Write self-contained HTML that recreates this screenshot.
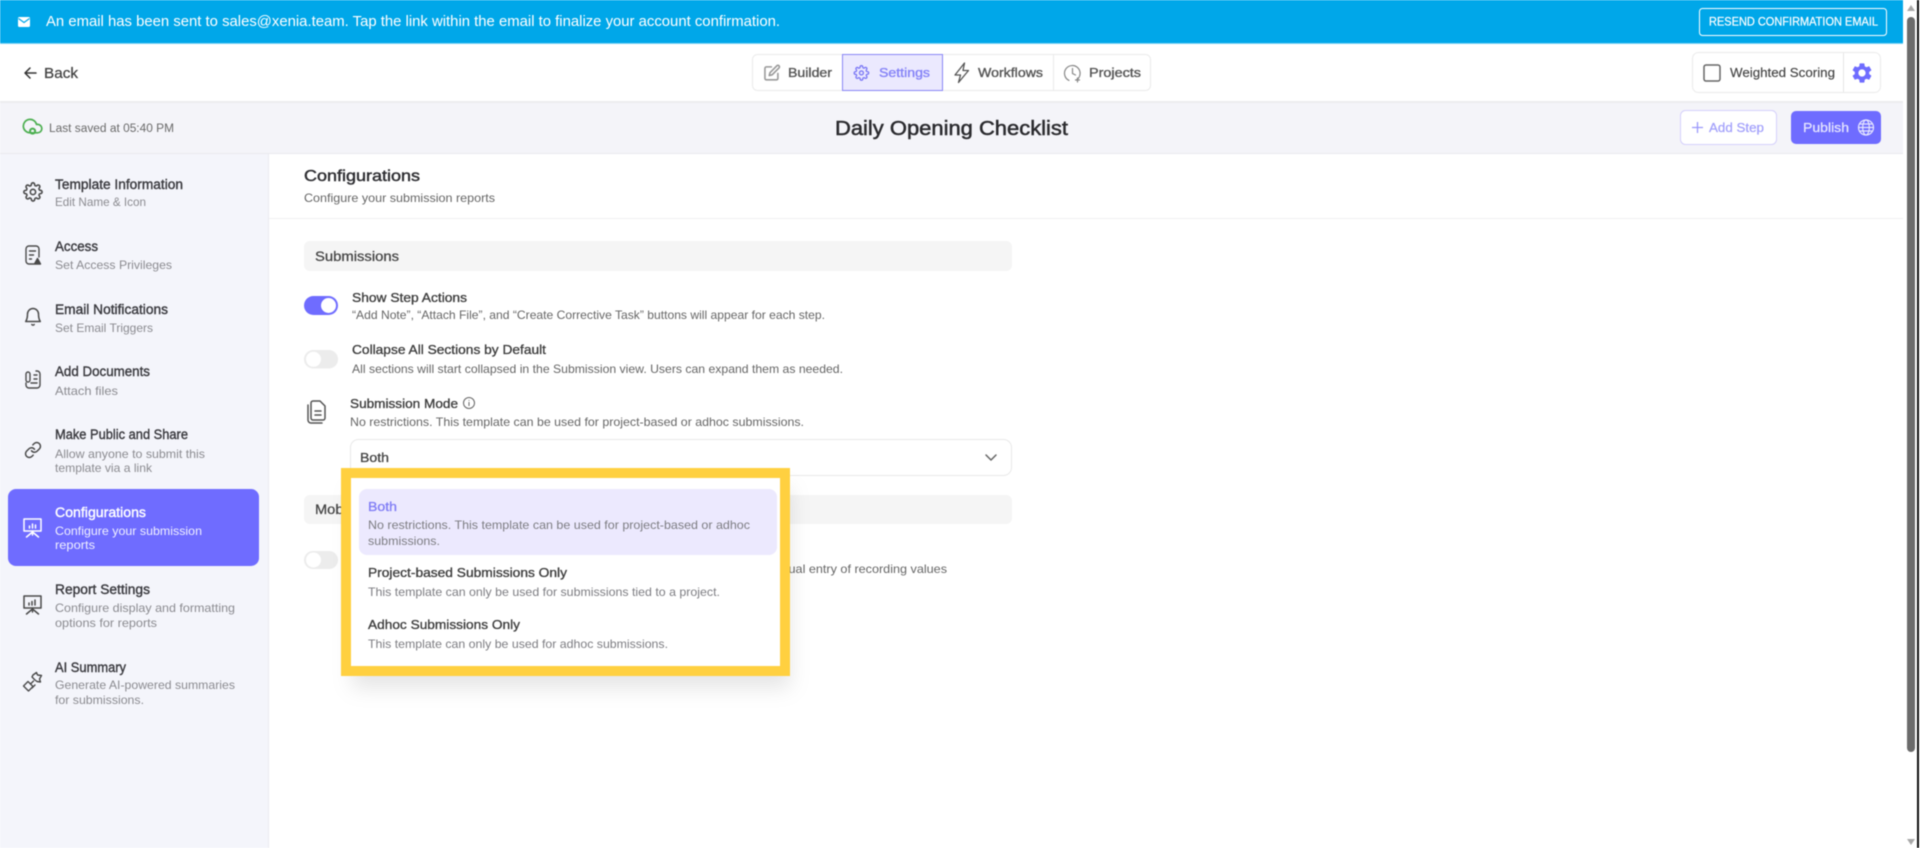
<!DOCTYPE html>
<html lang="en">
<head>
<meta charset="utf-8">
<title>Daily Opening Checklist</title>
<style>
html,body{margin:0;padding:0;width:1920px;height:848px;overflow:hidden;background:#fff}
svg{display:block;filter:blur(.45px)}
text{font-family:"Liberation Sans",sans-serif;white-space:pre}
.t{font-size:13.5px;stroke:#3a3a3f;stroke-width:.38px;fill:#3a3a3f}
.s{font-size:12px;fill:#8b8b90}
.h{font-size:13px;stroke:#3d3d3d;stroke-width:.32px;fill:#3d3d3d}
.d{font-size:12px;fill:#666}
.ic{fill:none;stroke:#4a4a4a;stroke-width:1.9;stroke-linecap:round;stroke-linejoin:round}
</style>
</head>
<body>
<svg xmlns="http://www.w3.org/2000/svg" width="1920" height="848" viewBox="0 0 1920 848">
<defs>
<path id="gear" d="M19.4 15a1.65 1.65 0 0 0 .33 1.82l.06.06a2 2 0 0 1 0 2.83 2 2 0 0 1-2.83 0l-.06-.06a1.65 1.65 0 0 0-1.82-.33 1.65 1.65 0 0 0-1 1.51V21a2 2 0 0 1-2 2 2 2 0 0 1-2-2v-.09A1.65 1.65 0 0 0 9 19.4a1.65 1.65 0 0 0-1.82.33l-.06.06a2 2 0 0 1-2.83 0 2 2 0 0 1 0-2.83l.06-.06a1.65 1.65 0 0 0 .33-1.82 1.65 1.65 0 0 0-1.51-1H3a2 2 0 0 1-2-2 2 2 0 0 1 2-2h.09A1.65 1.65 0 0 0 4.6 9a1.65 1.65 0 0 0-.33-1.82l-.06-.06a2 2 0 0 1 0-2.83 2 2 0 0 1 2.83 0l.06.06a1.65 1.65 0 0 0 1.82.33H9a1.65 1.65 0 0 0 1-1.51V3a2 2 0 0 1 2-2 2 2 0 0 1 2 2v.09a1.65 1.65 0 0 0 1 1.51 1.65 1.65 0 0 0 1.82-.33l.06-.06a2 2 0 0 1 2.83 0 2 2 0 0 1 0 2.83l-.06.06a1.65 1.65 0 0 0-.33 1.82V9a1.65 1.65 0 0 0 1.51 1H21a2 2 0 0 1 2 2 2 2 0 0 1-2 2h-.09a1.65 1.65 0 0 0-1.51 1z"/>
<filter id="sh" x="-20%" y="-20%" width="140%" height="150%"><feDropShadow dx="0" dy="12" stdDeviation="10" flood-color="#000" flood-opacity=".10"/></filter>
</defs>

<!-- page backgrounds -->
<rect width="1920" height="848" fill="#fff"/>
<rect x="0" y="0" width="1903" height="43" fill="#00a7e9"/>
<rect x="0" y="43" width="1903" height="1" fill="#7fd3f4"/>
<rect x="0" y="101" width="1903" height="2" fill="#ececef"/>
<rect x="0" y="103" width="1903" height="50" fill="#f4f4f9"/>
<rect x="0" y="153" width="1903" height="1" fill="#e9e9ee"/>
<rect x="0" y="154" width="268" height="694" fill="#f4f5fb"/>
<rect x="268" y="154" width="1" height="694" fill="#ebebf0"/>

<!-- banner -->
<rect x="18" y="17" width="12" height="10" rx="1.5" fill="#fff"/>
<path d="M18.5 18.5l5.5 4 5.5-4" fill="none" stroke="#00a7e9" stroke-width="1.2"/>
<text x="46" y="26" font-size="14.5" fill="#fff" textLength="734" lengthAdjust="spacingAndGlyphs">An email has been sent to sales@xenia.team. Tap the link within the email to finalize your account confirmation.</text>
<rect x="1699.5" y="8.5" width="187" height="27" rx="3" fill="none" stroke="#fff" stroke-width="1"/>
<text x="1709" y="25.5" font-size="11.5" fill="#fff" stroke="#fff" stroke-width=".2" textLength="169" lengthAdjust="spacingAndGlyphs">RESEND CONFIRMATION EMAIL</text>

<!-- top bar -->
<path d="M36 73H25M30 68l-5 5 5 5" fill="none" stroke="#333" stroke-width="1.5" stroke-linecap="round" stroke-linejoin="round"/>
<text x="44" y="78" font-size="15" fill="#444" stroke="#444" stroke-width=".25" textLength="34" lengthAdjust="spacingAndGlyphs">Back</text>

<rect x="752.5" y="54.5" width="398" height="36" rx="5" fill="#fff" stroke="#ebebeb"/>
<rect x="842.5" y="54.5" width="100" height="36" fill="#ebe9fe" stroke="#8a87f5"/>
<line x1="1053.5" y1="55" x2="1053.5" y2="90" stroke="#ebebeb"/>
<g transform="translate(763.5,64) scale(.72)" fill="none" stroke="#999" stroke-width="2.200" stroke-linecap="round" stroke-linejoin="round"><path d="M11 4H4a2 2 0 0 0-2 2v14a2 2 0 0 0 2 2h14a2 2 0 0 0 2-2v-7"/><path d="M18.5 2.5a2.12 2.12 0 0 1 3 3L12 15l-4 1 1-4 9.5-9.5z"/></g>
<text x="788" y="77" font-size="13" fill="#555" stroke="#555" stroke-width=".35" textLength="44" lengthAdjust="spacingAndGlyphs">Builder</text>
<g transform="translate(853.5,65) scale(.66)" fill="none" stroke="#7b78f5" stroke-width="2"><circle cx="12" cy="12" r="3"/><use href="#gear"/></g>
<text x="879" y="77" font-size="13" fill="#8583f7" stroke="#8583f7" stroke-width=".35" textLength="51" lengthAdjust="spacingAndGlyphs">Settings</text>
<path d="M964.500 63l-9.500 12h5.500l-2 7.500 10-12h-5.500z" fill="none" stroke="#555" stroke-width="1.300" stroke-linejoin="round"/>
<text x="978" y="77" font-size="13" fill="#555" stroke="#555" stroke-width=".35" textLength="65" lengthAdjust="spacingAndGlyphs">Workflows</text>
<g fill="none" stroke="#888" stroke-width="1.200" stroke-linecap="round"><path d="M1069 80.400a7.800 7.800 0 1 1 7.500-.5"/><path d="M1072.500 68.500v5l3 1.500"/><path d="M1075.500 80h4M1077.500 78v4"/></g>
<text x="1089" y="77" font-size="13" fill="#555" stroke="#555" stroke-width=".35" textLength="52" lengthAdjust="spacingAndGlyphs">Projects</text>

<rect x="1692.5" y="52.5" width="188" height="40" rx="6" fill="#fff" stroke="#ebebeb"/>
<line x1="1843.5" y1="53" x2="1843.5" y2="92" stroke="#e6e6e6"/>
<rect x="1704" y="65" width="16" height="16" rx="2" fill="#fff" stroke="#666" stroke-width="1.5"/>
<text x="1730" y="77" font-size="13" fill="#444" stroke="#444" stroke-width=".15" textLength="105" lengthAdjust="spacingAndGlyphs">Weighted Scoring</text>
<g transform="translate(1850,61) scale(1)" fill="#6f6cff"><path d="M19.14 12.94c.04-.3.06-.61.06-.94 0-.32-.02-.64-.07-.94l2.03-1.58c.18-.14.23-.41.12-.61l-1.92-3.32c-.12-.22-.37-.29-.59-.22l-2.39.96c-.5-.38-1.03-.7-1.62-.94l-.36-2.54c-.04-.24-.24-.41-.48-.41h-3.84c-.24 0-.43.17-.47.41l-.36 2.54c-.59.24-1.13.57-1.62.94l-2.39-.96c-.22-.08-.47 0-.59.22L2.74 8.87c-.12.21-.08.47.12.61l2.03 1.58c-.05.3-.09.63-.09.94s.02.64.07.94l-2.03 1.58c-.18.14-.23.41-.12.61l1.92 3.32c.12.22.37.29.59.22l2.39-.96c.5.38 1.03.7 1.62.94l.36 2.54c.05.24.24.41.48.41h3.84c.24 0 .44-.17.47-.41l.36-2.54c.59-.24 1.13-.56 1.62-.94l2.39.96c.22.08.47 0 .59-.22l1.92-3.32c.12-.22.07-.47-.12-.61l-2.01-1.58zM12 15.6c-1.98 0-3.6-1.62-3.6-3.6s1.62-3.6 3.6-3.6 3.6 1.62 3.6 3.6-1.62 3.6-3.6 3.6z"/></g>

<!-- sub header -->
<g transform="translate(22.500,116) scale(.84)" fill="none" stroke="#4caf50" stroke-width="2"><path d="M18 10h-1.26A8 8 0 1 0 9 20h9a5 5 0 0 0 0-10z"/><circle cx="12" cy="18" r="3" stroke-width="2.400"/></g>
<text x="49" y="132" font-size="11.5" fill="#6a6a6a" textLength="125" lengthAdjust="spacingAndGlyphs">Last saved at 05:40 PM</text>
<text x="835" y="135" font-size="20" fill="#2b2b2f" stroke="#2b2b2f" stroke-width=".5" textLength="233" lengthAdjust="spacingAndGlyphs">Daily Opening Checklist</text>
<rect x="1680.5" y="110.5" width="96" height="34" rx="5" fill="#fff" stroke="#d5d0fb"/>
<path d="M1692 127.5h11M1697.5 122v11" stroke="#9a98fb" stroke-width="1.3" fill="none"/>
<text x="1709" y="132" font-size="13" fill="#a3a1fb" stroke="#a3a1fb" stroke-width=".25" textLength="55" lengthAdjust="spacingAndGlyphs">Add Step</text>
<rect x="1791" y="111" width="90" height="33" rx="5" fill="#6f6cff"/>
<text x="1803" y="132" font-size="13" fill="#e6e6ff" stroke="#e6e6ff" stroke-width=".25" textLength="46" lengthAdjust="spacingAndGlyphs">Publish</text>
<g fill="none" stroke="#e6e6ff" stroke-width="1.2"><circle cx="1866" cy="127.5" r="7.5"/><ellipse cx="1866" cy="127.5" rx="3.3" ry="7.5"/><path d="M1858.5 127.5h15M1859.8 124h12.4M1859.8 131h12.4"/></g>

<!-- sidebar active -->
<rect x="8" y="489" width="251" height="77" rx="8" fill="#6f6cff"/>

<!-- sidebar text -->
<text class="t" x="55" y="189" textLength="128" lengthAdjust="spacingAndGlyphs">Template Information</text>
<text class="s" x="55" y="206" textLength="91" lengthAdjust="spacingAndGlyphs">Edit Name &amp; Icon</text>
<text class="t" x="55" y="251" textLength="43" lengthAdjust="spacingAndGlyphs">Access</text>
<text class="s" x="55" y="269" textLength="117" lengthAdjust="spacingAndGlyphs">Set Access Privileges</text>
<text class="t" x="55" y="314" textLength="113" lengthAdjust="spacingAndGlyphs">Email Notifications</text>
<text class="s" x="55" y="332" textLength="98" lengthAdjust="spacingAndGlyphs">Set Email Triggers</text>
<text class="t" x="55" y="376" textLength="95" lengthAdjust="spacingAndGlyphs">Add Documents</text>
<text class="s" x="55" y="395" textLength="63" lengthAdjust="spacingAndGlyphs">Attach files</text>
<text class="t" x="55" y="439" textLength="133" lengthAdjust="spacingAndGlyphs">Make Public and Share</text>
<text class="s" x="55" y="458" textLength="150" lengthAdjust="spacingAndGlyphs">Allow anyone to submit this</text>
<text class="s" x="55" y="472" textLength="97" lengthAdjust="spacingAndGlyphs">template via a link</text>
<text class="t" x="55" y="517" style="fill:#fff;stroke:#fff" textLength="91" lengthAdjust="spacingAndGlyphs">Configurations</text>
<text class="s" x="55" y="535" style="fill:#f0f0ff" textLength="147" lengthAdjust="spacingAndGlyphs">Configure your submission</text>
<text class="s" x="55" y="549" style="fill:#f0f0ff" textLength="40" lengthAdjust="spacingAndGlyphs">reports</text>
<text class="t" x="55" y="594" textLength="95" lengthAdjust="spacingAndGlyphs">Report Settings</text>
<text class="s" x="55" y="612" textLength="180" lengthAdjust="spacingAndGlyphs">Configure display and formatting</text>
<text class="s" x="55" y="627" textLength="102" lengthAdjust="spacingAndGlyphs">options for reports</text>
<text class="t" x="55" y="672" textLength="71" lengthAdjust="spacingAndGlyphs">AI Summary</text>
<text class="s" x="55" y="689" textLength="180" lengthAdjust="spacingAndGlyphs">Generate AI-powered summaries</text>
<text class="s" x="55" y="704" textLength="89" lengthAdjust="spacingAndGlyphs">for submissions.</text>

<!-- sidebar icons -->
<g class="ic" transform="translate(23,182) scale(.83)" style="stroke-width:1.900"><circle cx="12" cy="12" r="3.2"/><use href="#gear"/></g>
<g class="ic" style="stroke-width:1.4"><path d="M34 264h-5a3 3 0 0 1-3-3v-12a3 3 0 0 1 3-3h7a3 3 0 0 1 3 3v8"/><path d="M29.500 251h6M29.500 255h4M29.500 259h2"/><path d="M37.500 258.500l3 5.500h-6z" fill="#4a4a4a"/></g>
<g class="ic" style="stroke-width:1.5"><path d="M33 308.500a5.500 5.500 0 0 0-5.500 5.500c0 4.800-1.800 7.500-1.800 7.500h14.600s-1.800-2.700-1.800-7.500a5.500 5.500 0 0 0-5.500-5.500z"/><path d="M31.800 324.500a1.400 1.400 0 0 0 2.400 0"/></g>
<g class="ic" style="stroke-width:1.4"><path d="M36 371h1a3 3 0 0 1 3 3v11a3 3 0 0 1-3 3h-8a3 3 0 0 1-3-3v-2"/><path d="M26 380v-6a2 2 0 0 1 4 0v6a2 2 0 0 1-4 0z"/><path d="M34 375h3M34 379h3M31 383h6"/></g>
<g class="ic" transform="translate(24,441) scale(.75)" style="stroke-width:2"><path d="M10 13a5 5 0 0 0 7.540.540l3-3a5 5 0 0 0-7.070-7.070l-1.720 1.710"/><path d="M14 11a5 5 0 0 0-7.540-.540l-3 3a5 5 0 0 0 7.070 7.070l1.710-1.710"/></g>
<g fill="none" stroke="#fff" stroke-width="1.500" stroke-linecap="round" stroke-linejoin="round"><rect x="24" y="519" width="17" height="12"/><path d="M32.500 531v4M32.500 532l-6 5M32.500 532l6 5"/><path d="M29.500 528v-2M32.500 528v-4M35.500 528v-3"/></g>
<g class="ic" style="stroke-width:1.500"><rect x="24" y="596" width="17" height="12"/><path d="M32.500 608v4M32.500 609l-6 5M32.500 609l6 5"/><path d="M29 605v-2M32 605v-3.500M35 605v-5"/></g>
<g class="ic" style="stroke-width:1.400"><path d="M23.500 686l4.500-4.500 5 5-4.500 4.500z"/><path d="M30.500 684l3-3M32 688l3-3"/><path d="M33 675l3.500-2.500 1 2.500 4 .5-2 3.500 1 3-3.500-.5-2-1.500-3-3z"/></g>

<!-- content header -->
<text x="304" y="181" font-size="16" fill="#2f2f33" stroke="#2f2f33" stroke-width=".45" textLength="116" lengthAdjust="spacingAndGlyphs">Configurations</text>
<text x="304" y="202" class="d" textLength="191" lengthAdjust="spacingAndGlyphs">Configure your submission reports</text>
<rect x="269" y="218" width="1634" height="1" fill="#efeff1"/>

<!-- submissions -->
<rect x="304" y="241" width="708" height="30" rx="6" fill="#f5f5f5"/>
<text x="315" y="261" font-size="13.500" fill="#444" stroke="#444" stroke-width=".25" textLength="84" lengthAdjust="spacingAndGlyphs">Submissions</text>

<rect x="304" y="296" width="34" height="19" rx="9.500" fill="#6f6cff"/>
<circle cx="328.500" cy="305.500" r="7.500" fill="#fff"/>
<text class="h" x="352" y="302" textLength="115" lengthAdjust="spacingAndGlyphs">Show Step Actions</text>
<text class="d" x="352" y="319" textLength="473" lengthAdjust="spacingAndGlyphs">“Add Note”, “Attach File”, and “Create Corrective Task” buttons will appear for each step.</text>

<rect x="304" y="350" width="34" height="18.500" rx="9.200" fill="#ececec"/>
<circle cx="313.500" cy="359.300" r="7.500" fill="#fff"/>
<text class="h" x="352" y="354" textLength="194" lengthAdjust="spacingAndGlyphs">Collapse All Sections by Default</text>
<text class="d" x="352" y="373" textLength="491" lengthAdjust="spacingAndGlyphs">All sections will start collapsed in the Submission view. Users can expand them as needed.</text>

<g fill="none" stroke="#555" stroke-width="1.500" stroke-linecap="round" stroke-linejoin="round"><path d="M313 401h7l5 5v12a2 2 0 0 1-2 2h-10a2 2 0 0 1-2-2v-15a2 2 0 0 1 2-2z"/><path d="M308 405v15a3 3 0 0 0 3 3h11"/><path d="M315 411h6M315 415h6"/></g>
<text class="h" x="350" y="408" textLength="108" lengthAdjust="spacingAndGlyphs">Submission Mode</text>
<circle cx="469" cy="403" r="5.500" fill="none" stroke="#666" stroke-width="1"/>
<path d="M469 402v4M469 400v.8" stroke="#666" stroke-width="1" fill="none"/>
<text class="d" x="350" y="426" textLength="454" lengthAdjust="spacingAndGlyphs">No restrictions. This template can be used for project-based or adhoc submissions.</text>

<rect x="350.500" y="439.500" width="661" height="36" rx="8" fill="#fff" stroke="#e9e9e9"/>
<text x="360" y="462" font-size="13" fill="#444" stroke="#444" stroke-width=".3" textLength="29" lengthAdjust="spacingAndGlyphs">Both</text>
<path d="M986 455l5 5 5-5" fill="none" stroke="#666" stroke-width="1.500" stroke-linecap="round" stroke-linejoin="round"/>

<!-- mobile section, mostly covered by the dropdown -->
<rect x="304" y="495" width="708" height="29" rx="6" fill="#f5f5f5"/>
<text x="315" y="514" font-size="13.500" fill="#444" stroke="#444" stroke-width=".25" textLength="100" lengthAdjust="spacingAndGlyphs">Mobile Settings</text>
<rect x="304" y="551" width="34" height="18" rx="9" fill="#ececec"/>
<circle cx="313.500" cy="560" r="7.500" fill="#fff"/>
<text class="d" x="764" y="573" textLength="183" lengthAdjust="spacingAndGlyphs">manual entry of recording values</text>

<!-- dropdown -->
<rect x="352" y="476" width="438" height="200" fill="#fff" filter="url(#sh)"/>
<rect x="346" y="473" width="439" height="198" fill="#fff" stroke="#ffd040" stroke-width="10"/>
<rect x="359" y="489" width="418" height="66" rx="8" fill="#ece9fe"/>
<text x="368" y="511" font-size="13" fill="#7f7cf5" stroke="#7f7cf5" stroke-width=".3" textLength="29" lengthAdjust="spacingAndGlyphs">Both</text>
<text class="s" x="368" y="529" style="fill:#7d7d82" textLength="382" lengthAdjust="spacingAndGlyphs">No restrictions. This template can be used for project-based or adhoc</text>
<text class="s" x="368" y="545" style="fill:#7d7d82" textLength="72" lengthAdjust="spacingAndGlyphs">submissions.</text>
<text class="h" x="368" y="577" textLength="199" lengthAdjust="spacingAndGlyphs">Project-based Submissions Only</text>
<text class="s" x="368" y="596" style="fill:#7d7d82" textLength="352" lengthAdjust="spacingAndGlyphs">This template can only be used for submissions tied to a project.</text>
<text class="h" x="368" y="629" textLength="152" lengthAdjust="spacingAndGlyphs">Adhoc Submissions Only</text>
<text class="s" x="368" y="648" style="fill:#7d7d82" textLength="300" lengthAdjust="spacingAndGlyphs">This template can only be used for adhoc submissions.</text>

<!-- scrollbar -->
<rect x="1903" y="0" width="17" height="848" fill="#fff"/>
<rect x="1907" y="17" width="8" height="735" rx="4" fill="#6b6b6b"/>
<path d="M1911 5l4 6h-8z" fill="#a8a8a8"/>
<path d="M1911 845l-4-6h8z" fill="#a8a8a8"/>
<rect x="1917" y="0" width="2" height="848" fill="#111"/>
</svg>
</body>
</html>
